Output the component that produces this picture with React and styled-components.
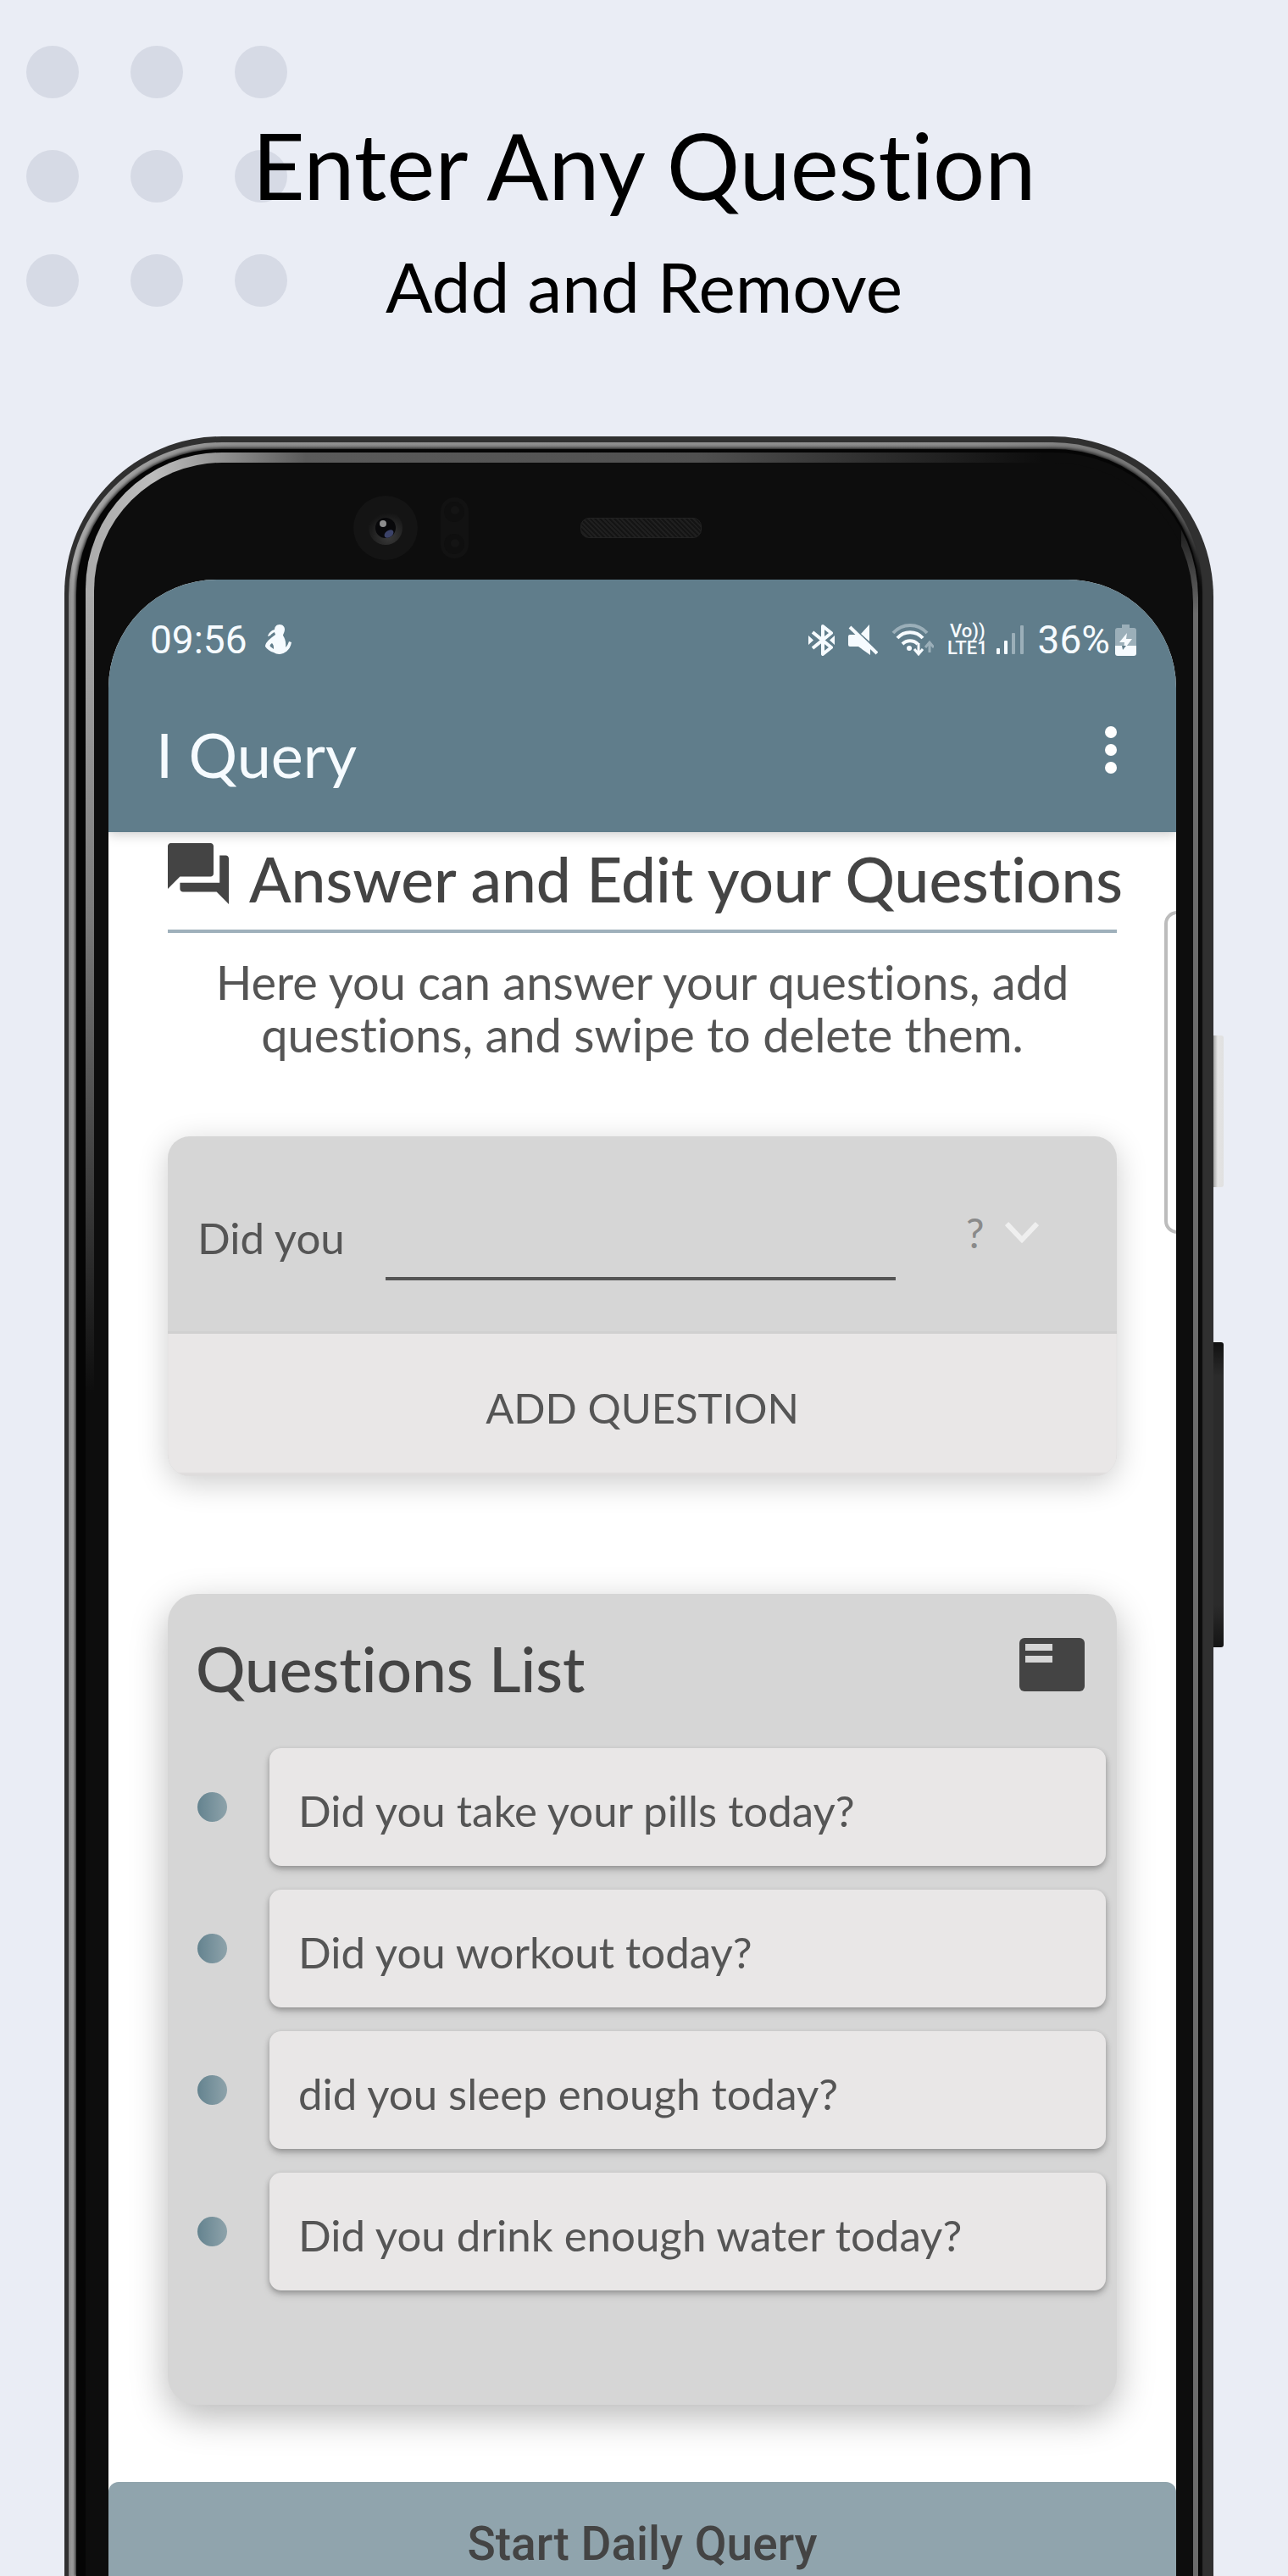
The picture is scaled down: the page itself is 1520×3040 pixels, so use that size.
import React, { useState } from "react";
import styled, { createGlobalStyle } from "styled-components";

const GlobalStyle = createGlobalStyle`
  * { box-sizing: border-box; }
  html, body { margin: 0; background: #eaedf5; }
  body {
    font-family: Lato, "Open Sans", sans-serif;
    font-variant-ligatures: none;
    color: #555555;
  }
  h1, h2, h3, p, ul { margin: 0; padding: 0; font-weight: 400; }
  button, input, select { font: inherit; color: inherit; margin: 0; border: 0; border-radius: 0; padding: 0; }
  svg { display: block; flex: none; }
`;

const Page = styled.div`
  position: relative;
  display: flex;
  flex-direction: column;
  min-height: 100vh;
  overflow: hidden;
  background: #eaedf5;
`;

const DotGrid = styled.div`
  position: absolute;
  top: 54px;
  left: 31px;
  display: grid;
  grid-template-columns: repeat(3, 62px);
  grid-auto-rows: 62px;
  gap: 61px;
`;

const Dot = styled.span`
  border-radius: 50%;
  background: #d6dae5;
`;

const Hero = styled.header`
  position: relative;
  display: flex;
  flex-direction: column;
  gap: 33px;
  padding: 134px 0 128px;
  text-align: center;
  color: #000000;
`;

const HeroTitle = styled.h1`
  font-size: 108px;
  line-height: 120px;
`;

const HeroSubtitle = styled.p`
  font-size: 82px;
  line-height: 100px;
`;

/* Phone body, from the outer shell inwards */
const Shell = styled.div`
  position: relative;
  flex: 1;
  display: flex;
  flex-direction: column;
  margin: 0 88px 0 76px;
  padding: 7px 13px 0 5px;
  border-radius: 186px 190px 0 0;
  background: #303030;
`;

const Rim = styled.div`
  flex: 1;
  display: flex;
  flex-direction: column;
  padding: 8px 4px 0 9px;
  border-radius: 181px 177px 0 0;
  background:
    linear-gradient(to bottom, rgba(16, 16, 16, 0) 60px, #101010 170px) right top / 50% 100% no-repeat,
    linear-gradient(to right, #858585 0, #a8a8a8 6px, #8f8f8f 200px, #8c8c8c 80%, #6e6e6e 100%);
`;

const Groove = styled.div`
  flex: 1;
  display: flex;
  flex-direction: column;
  padding: 4px 1px 0 11px;
  border-radius: 172px 172px 0 0;
  background: #050505;
  box-shadow: 0 0 4px 1px #050505;
`;

const Glint = styled.div`
  flex: 1;
  display: flex;
  flex-direction: column;
  padding: 12px 6px 0 10px;
  border-radius: 161px 171px 0 0;
  background:
    linear-gradient(to bottom, #aaaaaa 0, #7a7a7a 380px, #0d0d0d 940px) left 170px / 50% 100% no-repeat,
    linear-gradient(to bottom, rgba(107, 107, 107, 0) 70px, #6b6b6b 190px) right top / 20px 100% no-repeat,
    linear-gradient(to right, #aaaaaa 0, #bdbdbd 80px, #5a5a5a 260px, #505050 55%, #0d0d0d 86%);
`;

const Bezel = styled.div`
  flex: 1;
  display: flex;
  flex-direction: column;
  padding: 0 20px 0 17px;
  border-radius: 151px 165px 0 0;
  background: #0d0d0d;
`;

const SensorRow = styled.div`
  display: grid;
  grid-template-columns: 1fr 143px 1fr;
  align-items: center;
  height: 138px;
  padding: 16px 4px 0 0;
`;

const Sensors = styled.div`
  display: flex;
  align-items: center;
  justify-content: flex-end;
  gap: 27px;
  padding-right: 132px;
`;

const Speaker = styled.div`
  height: 24px;
  border-radius: 10px;
  border: 1px solid #222222;
  background: repeating-linear-gradient(45deg, #1f1f1f 0 2px, #141414 2px 4px);
`;

const SideButton = styled.span`
  position: absolute;
  right: -12px;
  top: ${(p) => (p.$light ? 707 : 1069)}px;
  width: 12px;
  height: ${(p) => (p.$light ? 179 : 360)}px;
  border-radius: 0 3px 3px 0;
  background: ${(p) =>
    p.$light
      ? "linear-gradient(to right, #a5a5a5, #e4e4e4 5px, #e0e0e0)"
      : "linear-gradient(to bottom, #111111, #2b2b2b 40px, #2b2b2b 310px, #141414)"};
`;

const Screen = styled.div`
  position: relative;
  flex: 1;
  display: flex;
  flex-direction: column;
  overflow: hidden;
  border-radius: 128px 128px 0 0;
  background: #ffffff;
`;

const TopArea = styled.div`
  position: relative;
  z-index: 1;
  background: #607d8b;
  color: #f6fbff;
  box-shadow: 0 2px 14px rgba(0, 0, 0, 0.22);
`;

const StatusBar = styled.div`
  display: flex;
  align-items: center;
  justify-content: space-between;
  padding: 41px 47px 0 49px;
  font-family: Roboto, sans-serif;
  font-size: 46px;
  line-height: 60px;
`;

const StatusGroup = styled.div`
  display: flex;
  align-items: center;
  gap: ${(p) => p.$gap}px;
`;

const Network = styled.span`
  display: flex;
  flex-direction: column;
  align-items: center;
  margin-right: -6px;
  font-size: 22px;
  line-height: 20px;
  font-weight: 500;
`;

const AppBar = styled.div`
  display: flex;
  align-items: flex-start;
  justify-content: space-between;
  padding: 55px 50px 42px 56px;
`;

const AppTitle = styled.h2`
  font-size: 72px;
  line-height: 100px;
`;

const IconButton = styled.button`
  display: flex;
  align-items: center;
  justify-content: center;
  width: 54px;
  height: 90px;
  background: none;
  color: #ffffff;
`;

const EdgeHandle = styled.span`
  position: absolute;
  top: 391px;
  right: -16px;
  width: 30px;
  height: 381px;
  border: 4px solid #bcbcbc;
  border-radius: 16px;
  background: #ffffff;
`;

const Main = styled.main`
  padding: 13px 70px 91px;
`;

const SectionTitle = styled.h2`
  font-size: 73px;
  line-height: 84px;
  font-weight: 500;
  color: #444444;
  white-space: nowrap;
`;

const PageHeading = styled.div`
  display: flex;
  align-items: flex-start;
  gap: 24px;
  padding-bottom: 18px;
  border-bottom: 4px solid #9fb0bb;
`;

const Intro = styled.p`
  margin: 27px 0 89px;
  font-size: 56px;
  line-height: 62px;
  text-align: center;
`;

const AddCard = styled.form`
  display: flex;
  flex-direction: column;
  overflow: hidden;
  border-radius: 26px;
  background: #d6d6d6;
  box-shadow: 0 8px 36px rgba(0, 0, 0, 0.2);
`;

const AddFields = styled.div`
  display: flex;
  align-items: flex-start;
  padding: 90px 92px 60px 35px;
  border-bottom: 3px solid #d0d0d0;
`;

const FieldLabel = styled.label`
  margin-right: 48px;
  font-size: 51px;
  line-height: 60px;
`;

const QuestionInput = styled.input`
  flex: 1;
  min-width: 0;
  height: 80px;
  border-bottom: 4px solid #555555;
  background: transparent;
  font-size: 51px;
  outline: none;
`;

const SelectWrap = styled.div`
  position: relative;
  width: 86px;
  margin-left: 83px;
`;

const EndingSelect = styled.select`
  appearance: none;
  width: 100%;
  height: 48px;
  background: transparent;
  font-size: 48px;
  line-height: 48px;
  color: #8a8a8a;
`;

const Chevron = styled.svg`
  position: absolute;
  right: 0;
  top: 10px;
  pointer-events: none;
`;

const AddButton = styled.button`
  height: 168px;
  padding-top: 5px;
  background: #e9e7e7;
  box-shadow: inset 0 -4px 2px #dedcdc;
  font-size: 49px;
`;

const ListCard = styled.section`
  margin-top: 139px;
  padding: 46px 13px 135px 0;
  border-radius: 34px;
  background: #d6d6d6;
  box-shadow: 0 14px 44px rgba(0, 0, 0, 0.28);
`;

const ListHeader = styled.div`
  display: flex;
  align-items: center;
  justify-content: space-between;
  padding: 0 25px 0 33px;
  margin-bottom: 52px;
`;

const ListIcon = styled.span`
  padding-bottom: 10px;
`;

const QuestionList = styled.ul`
  display: flex;
  flex-direction: column;
  gap: 28px;
  list-style: none;
`;

const QuestionRow = styled.li`
  display: flex;
  align-items: center;
  gap: 50px;
  padding-left: 35px;
`;

const Bullet = styled.span`
  width: 35px;
  height: 35px;
  border-radius: 50%;
  background: linear-gradient(to right, #64838f, #8ea3ab);
`;

const QuestionCard = styled.div`
  flex: 1;
  padding: 44px 34px 35px;
  border-radius: 14px;
  background: #e9e7e7;
  box-shadow: 0 3px 6px rgba(0, 0, 0, 0.28), 0 6px 12px rgba(0, 0, 0, 0.08);
  font-size: 51px;
  line-height: 60px;
`;

const StartButton = styled.button`
  flex: 1;
  padding: 42px 0 8px;
  border-radius: 12px 12px 0 0;
  background: #90a4ad;
  color: #444444;
  font-family: Roboto, sans-serif;
  font-size: 55px;
  line-height: 60px;
  font-weight: 500;
`;

const QUESTIONS = [
  "Did you take your pills today?",
  "Did you workout today?",
  "did you sleep enough today?",
  "Did you drink enough water today?",
];

const Camera = () => (
  <svg width="76" height="76" viewBox="0 0 76 76" aria-hidden="true">
    <defs>
      <radialGradient id="lens" cx="0.6" cy="0.75" r="0.7">
        <stop offset="0" stopColor="#3a3a3a" />
        <stop offset="1" stopColor="#141414" />
      </radialGradient>
    </defs>
    <circle cx="38" cy="38" r="38" fill="#141414" />
    <circle cx="38" cy="38" r="20" fill="url(#lens)" />
    <circle cx="38" cy="38" r="12" fill="#08080a" />
    <ellipse cx="42" cy="45" rx="6" ry="4" fill="#3b4268" transform="rotate(-35 42 45)" />
    <circle cx="35" cy="33" r="4" fill="#8d8d8d" />
  </svg>
);

const ProximitySensor = () => (
  <svg width="33" height="72" viewBox="0 0 33 72" aria-hidden="true">
    <rect width="33" height="72" rx="16" fill="#121212" />
    <circle cx="16" cy="17" r="12" fill="#0f0f0f" />
    <circle cx="16" cy="55" r="12" fill="#0f0f0f" />
    <circle cx="17" cy="15" r="5" fill="#141414" />
    <circle cx="17" cy="54" r="5" fill="#141414" />
  </svg>
);

const FigureIcon = () => (
  <svg width="31" height="36" viewBox="0 0 31 36" fill="currentColor" aria-hidden="true">
    <path d="M17 0c4 0 6 3 6 6 0 3-2 5-2 7 2 3 4 8 3 14 2-2 3-4 4-7l3 1c-1 6-4 10-8 12-2 2-9 3-13 0C6 32 2 29 0 26c0-4 4-8 8-11l4-3c0-1-1-2-1-3-2 1-4 2-5 4l-3 1c1-4 4-7 8-8 0-3 2-6 6-6zM8 22c-2 1-3 3-2 4l4 3c0-3 0-5-2-7z" />
  </svg>
);

const BluetoothIcon = () => (
  <svg width="31" height="37" viewBox="0 0 31 37" fill="none" stroke="currentColor" strokeWidth="4" strokeLinejoin="round" aria-hidden="true">
    <path d="M5 9l22 18-10 8V2l10 8L5 28" />
    <path d="M0 13l6 5.500-6 5.500zM31 13l-6 5.500 6 5.500z" fill="currentColor" stroke="none" />
  </svg>
);

const MuteIcon = () => (
  <svg width="35" height="36" viewBox="0 0 35 36" fill="currentColor" aria-hidden="true">
    <path d="M0 14q0-2 2-2h8l16 16v8L12 26H2q-2 0-2-2zM15 11L25 0v20z" />
    <path d="M2 3l32 31" fill="none" stroke="currentColor" strokeWidth="4" />
  </svg>
);

const WifiIcon = () => (
  <svg width="50" height="40" viewBox="0 0 50 40" fill="none" stroke="currentColor" strokeWidth="4" aria-hidden="true">
    <path d="M2 12c11-12 29-12 40 0" opacity="0.4" />
    <path d="M7 18c8-9 22-9 30 0M13 25c5-5 13-5 18 0" />
    <circle cx="21" cy="30" r="3" fill="currentColor" stroke="none" />
    <path d="M32 24v12M27 31l5 6 5-6" strokeWidth="3" />
    <path d="M45 35V23M40 29l5-6 5 6" strokeWidth="3" opacity="0.4" />
  </svg>
);

const SignalIcon = () => (
  <svg width="33" height="36" viewBox="0 0 33 36" fill="currentColor" aria-hidden="true">
    <rect x="0" y="28" width="4" height="7" rx="1" />
    <rect x="9" y="19" width="4" height="16" rx="1" />
    <rect x="18" y="10" width="4" height="25" rx="1" opacity="0.4" />
    <rect x="28" y="1" width="4" height="34" rx="1" opacity="0.4" />
  </svg>
);

const BatteryIcon = () => (
  <svg width="25" height="38" viewBox="0 0 25 38" fill="currentColor" aria-hidden="true">
    <path d="M8 1h9v4h5q3 0 3 3v18H0V8q0-3 3-3h5z" opacity="0.4" />
    <path d="M0 26h25v9q0 3-3 3H3q-3 0-3-3z" />
    <path d="M14 11L5 22h6l-1 9 10-13h-7z" />
    <path d="M8 26h5l-4 5z" fill="#607d8b" />
  </svg>
);

const KebabIcon = () => (
  <svg width="16" height="60" viewBox="0 0 16 60" fill="currentColor" aria-hidden="true">
    <circle cx="8" cy="9" r="7" />
    <circle cx="8" cy="30" r="7" />
    <circle cx="8" cy="51" r="7" />
  </svg>
);

const ForumIcon = () => (
  <svg width="72" height="72" viewBox="2 2 20 20" fill="#444444" aria-hidden="true">
    <path d="M21 6h-2v9H6v2c0 .55.45 1 1 1h11l4 4V7c0-.55-.45-1-1-1zm-4 6V3c0-.55-.45-1-1-1H3c-.55 0-1 .45-1 1v14l4-4h10c.55 0 1-.45 1-1z" />
  </svg>
);

const PlaylistIcon = () => (
  <svg width="77" height="63" viewBox="0 0 77 63" aria-hidden="true">
    <rect width="77" height="63" rx="6" fill="#444444" />
    <path d="M7 7h32v8H7zM7 21h32v8H7z" fill="#d6d6d6" />
  </svg>
);

export default function App() {
  const [draft, setDraft] = useState("");
  const [ending, setEnding] = useState("?");
  const [questions, setQuestions] = useState(QUESTIONS);

  const addQuestion = (event) => {
    event.preventDefault();
    if (!draft.trim()) return;
    setQuestions([...questions, `Did you ${draft.trim()}${ending}`]);
    setDraft("");
  };

  return (
    <Page>
      <GlobalStyle />
      <DotGrid aria-hidden="true">
        {Array.from({ length: 9 }, (_, i) => (
          <Dot key={i} />
        ))}
      </DotGrid>
      <Hero>
        <HeroTitle>Enter Any Question</HeroTitle>
        <HeroSubtitle>Add and Remove</HeroSubtitle>
      </Hero>
      <Shell>
        <SideButton $light />
        <SideButton />
        <Rim>
          <Groove>
            <Glint>
              <Bezel>
                <SensorRow>
                  <Sensors>
                    <Camera />
                    <ProximitySensor />
                  </Sensors>
                  <Speaker />
                </SensorRow>
                <Screen>
                  <TopArea>
                    <StatusBar>
                      <StatusGroup $gap={21}>
                        <span>09:56</span>
                        <FigureIcon />
                      </StatusGroup>
                      <StatusGroup $gap={16}>
                        <BluetoothIcon />
                        <MuteIcon />
                        <WifiIcon />
                        <Network>
                          <span>Vo))</span>
                          <span>LTE1</span>
                        </Network>
                        <SignalIcon />
                        <StatusGroup $gap={6}>
                          <span>36%</span>
                          <BatteryIcon />
                        </StatusGroup>
                      </StatusGroup>
                    </StatusBar>
                    <AppBar>
                      <AppTitle>I Query</AppTitle>
                      <IconButton type="button" aria-label="More options">
                        <KebabIcon />
                      </IconButton>
                    </AppBar>
                  </TopArea>
                  <Main>
                    <PageHeading>
                      <ForumIcon />
                      <SectionTitle>Answer and Edit your Questions</SectionTitle>
                    </PageHeading>
                    <Intro>Here you can answer your questions, add questions, and swipe to delete them.</Intro>
                    <AddCard onSubmit={addQuestion}>
                      <AddFields>
                        <FieldLabel htmlFor="question">Did you</FieldLabel>
                        <QuestionInput id="question" value={draft} onChange={(e) => setDraft(e.target.value)} />
                        <SelectWrap>
                          <EndingSelect aria-label="Ending" value={ending} onChange={(e) => setEnding(e.target.value)}>
                            <option>?</option>
                            <option>.</option>
                          </EndingSelect>
                          <Chevron width="40" height="27" viewBox="0 0 40 27" fill="none" stroke="#efefef" strokeWidth="6" aria-hidden="true">
                            <path d="M2 3l18 19L38 3" />
                          </Chevron>
                        </SelectWrap>
                      </AddFields>
                      <AddButton type="submit">ADD QUESTION</AddButton>
                    </AddCard>
                    <ListCard>
                      <ListHeader>
                        <SectionTitle>Questions List</SectionTitle>
                        <ListIcon>
                          <PlaylistIcon />
                        </ListIcon>
                      </ListHeader>
                      <QuestionList>
                        {questions.map((question) => (
                          <QuestionRow key={question}>
                            <Bullet />
                            <QuestionCard>{question}</QuestionCard>
                          </QuestionRow>
                        ))}
                      </QuestionList>
                    </ListCard>
                  </Main>
                  <StartButton type="button">Start Daily Query</StartButton>
                  <EdgeHandle />
                </Screen>
              </Bezel>
            </Glint>
          </Groove>
        </Rim>
      </Shell>
    </Page>
  );
}
